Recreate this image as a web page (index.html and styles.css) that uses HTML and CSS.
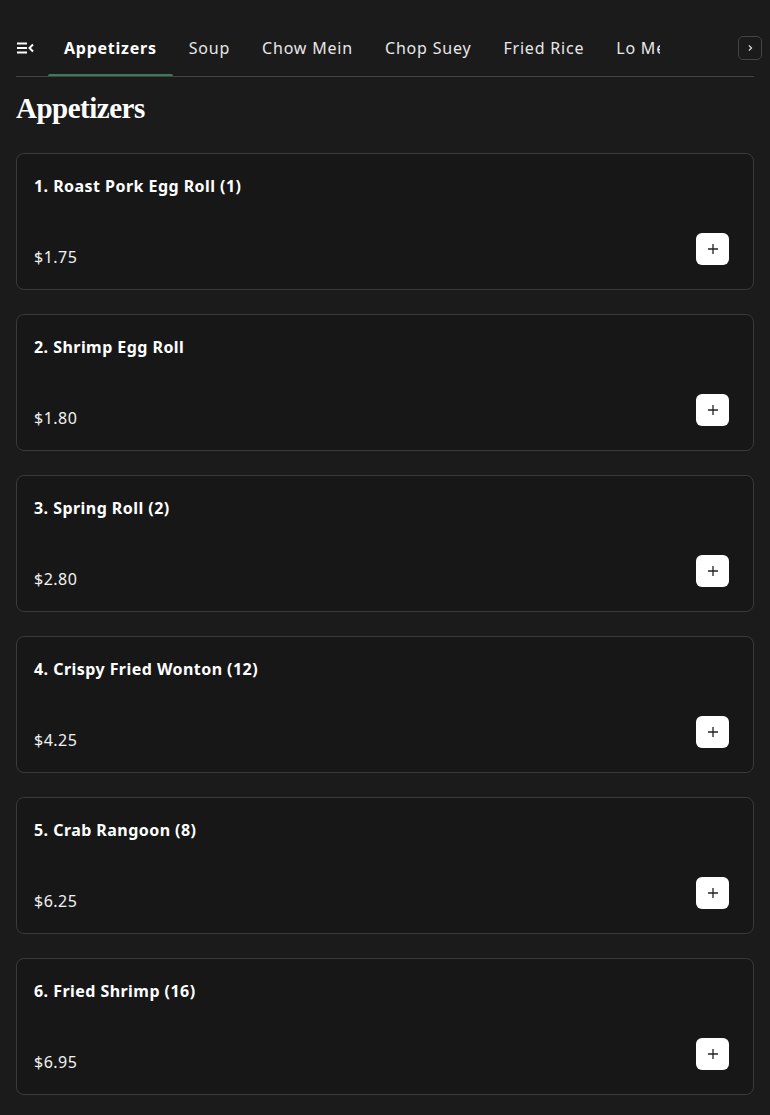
FILE: index.html
```html
<!DOCTYPE html>
<html lang="en">
<head>
<meta charset="utf-8">
<title>Menu</title>
<link rel="stylesheet" href="styles.css">
</head>
<body>
<div class="page">
  <nav class="tabs">
    <button class="menu-btn" aria-label="Menu">
      <svg width="18" height="12" viewBox="0 0 18 12"><path d="M1 1.5h10M1 6h10M1 10.5h10" stroke="#fff" stroke-width="2" fill="none"/><path d="M17 2.5L13.5 6L17 9.5" stroke="#fff" stroke-width="2" fill="none"/></svg>
    </button>
    <div class="tab-scroll">
      <a class="tab active">Appetizers</a>
      <a class="tab">Soup</a>
      <a class="tab">Chow Mein</a>
      <a class="tab">Chop Suey</a>
      <a class="tab">Fried Rice</a>
      <a class="tab">Lo Mein</a>
    </div>
    <button class="next-btn" aria-label="Next">
      <svg width="8" height="8" viewBox="0 0 8 8"><path d="M3 1.5L5.5 4L3 6.5" stroke="#ddd" stroke-width="1.2" fill="none"/></svg>
    </button>
  </nav>

  <h1 class="section-title">Appetizers</h1>

  <div class="items">
    <div class="card"><div class="name">1. Roast Pork Egg Roll (1)</div><div class="row"><span class="price">$1.75</span><button class="add"><svg width="10" height="10" viewBox="0 0 10 10"><path d="M5 0v10M0 5h10" stroke="#222" stroke-width="1.3"/></svg></button></div></div>
    <div class="card"><div class="name">2. Shrimp Egg Roll</div><div class="row"><span class="price">$1.80</span><button class="add"><svg width="10" height="10" viewBox="0 0 10 10"><path d="M5 0v10M0 5h10" stroke="#222" stroke-width="1.3"/></svg></button></div></div>
    <div class="card"><div class="name">3. Spring Roll (2)</div><div class="row"><span class="price">$2.80</span><button class="add"><svg width="10" height="10" viewBox="0 0 10 10"><path d="M5 0v10M0 5h10" stroke="#222" stroke-width="1.3"/></svg></button></div></div>
    <div class="card"><div class="name">4. Crispy Fried Wonton (12)</div><div class="row"><span class="price">$4.25</span><button class="add"><svg width="10" height="10" viewBox="0 0 10 10"><path d="M5 0v10M0 5h10" stroke="#222" stroke-width="1.3"/></svg></button></div></div>
    <div class="card"><div class="name">5. Crab Rangoon (8)</div><div class="row"><span class="price">$6.25</span><button class="add"><svg width="10" height="10" viewBox="0 0 10 10"><path d="M5 0v10M0 5h10" stroke="#222" stroke-width="1.3"/></svg></button></div></div>
    <div class="card"><div class="name">6. Fried Shrimp (16)</div><div class="row"><span class="price">$6.95</span><button class="add"><svg width="10" height="10" viewBox="0 0 10 10"><path d="M5 0v10M0 5h10" stroke="#222" stroke-width="1.3"/></svg></button></div></div>
  </div>
</div>
</body>
</html>
```
FILE: styles.css
```css
* { box-sizing: border-box; }
html, body { margin: 0; padding: 0; background: #1b1b1b; }
body {
  color: #fff;
  font-family: "Noto Sans", "Open Sans", sans-serif;
}
.page { padding: 20px 16px 20px; }

.tabs {
  display: flex;
  align-items: center;
  height: 57px;
  border-bottom: 1px solid #444;
}
.menu-btn {
  background: none;
  border: 0;
  padding: 0;
  width: 32px;
  height: 56px;
  display: flex;
  align-items: center;
  justify-content: flex-start;
  flex: none;
  cursor: pointer;
}
.tab-scroll {
  display: flex;
  flex: 1;
  overflow: hidden;
  height: 56px;
  margin-right: 78px;
}
.tab {
  flex: none;
  padding: 0 16px;
  height: 56px;
  display: flex;
  align-items: center;
  font-size: 16px;
  letter-spacing: 0.8px;
  color: #e8e8e8;
  position: relative;
  white-space: nowrap;
}
.tab.active {
  font-weight: 700;
  letter-spacing: 0.75px;
  color: #fff;
}
.tab.active::after {
  content: "";
  position: absolute;
  left: 0;
  right: 0;
  bottom: -2px;
  height: 4px;
  border-radius: 3px;
  background: #3b7a5c;
}
.next-btn {
  flex: none;
  width: 24px;
  height: 24px;
  margin-right: -8px;
  border: 1px solid #444;
  border-radius: 5px;
  background: #1b1b1b;
  display: flex;
  align-items: center;
  justify-content: center;
  padding: 0;
}

.section-title {
  margin: 14px 0 28px;
  font-family: "Liberation Serif", "DejaVu Serif", serif;
  font-weight: 700;
  font-size: 29px;
  line-height: 34px;
  letter-spacing: -0.5px;
}

.items { display: flex; flex-direction: column; gap: 24px; }
.card {
  background: #171717;
  border: 1px solid #3a3a3a;
  border-radius: 8px;
  padding: 20px 24px 20px 17px;
  height: 137px;
}
.name {
  font-size: 16px;
  font-weight: 700;
  line-height: 24px;
  letter-spacing: 0.45px;
}
.row {
  display: flex;
  align-items: flex-end;
  justify-content: space-between;
  margin-top: 35px;
}
.price {
  font-size: 16px;
  line-height: 24px;
  letter-spacing: 0.5px;
  color: #f2f2f2;
}
.add {
  width: 33px;
  height: 32px;
  margin-bottom: 4px;
  border: 0;
  border-radius: 6px;
  background: #fff;
  display: flex;
  align-items: center;
  justify-content: center;
  padding: 0;
}
```
